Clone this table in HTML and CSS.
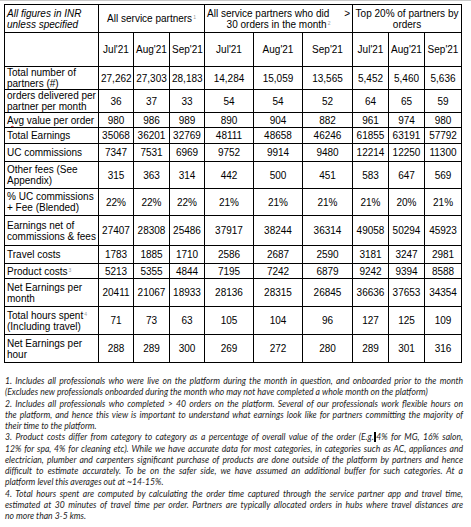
FILE: index.html
```html
<!DOCTYPE html>
<html>
<head>
<meta charset="utf-8">
<link rel="stylesheet" href="styles.css">
</head>
<body>
<div class="page">
<table class="fin">
<colgroup>
<col class="w94"><col class="w35"><col class="w36"><col class="w35"><col class="w49"><col class="w49"><col class="w50"><col class="w36"><col class="w36"><col class="w37">
</colgroup>
<tr class="h28">
<td class="lbl it">All figures in INR unless specified</td>
<td colspan="3">All service partners<sup class="fn">1</sup></td>
<td colspan="3" class="g2"><div class="g2l"><span>All service partners who did</span><span>&gt;</span></div>30 orders in the month<sup class="fn">2</sup></td>
<td colspan="3">Top 20% of partners by orders</td>
</tr>
<tr class="h34"><td class="lbl"></td><td>Jul'21</td><td>Aug'21</td><td>Sep'21</td><td>Jul'21</td><td>Aug'21</td><td>Sep'21</td><td>Jul'21</td><td>Aug'21</td><td>Sep'21</td></tr>
<tr class="h22"><td class="lbl">Total number of partners (#)</td><td>27,262</td><td>27,303</td><td>28,183</td><td>14,284</td><td>15,059</td><td>13,565</td><td>5,452</td><td>5,460</td><td>5,636</td></tr>
<tr class="h22"><td class="lbl">orders delivered per partner per month</td><td>36</td><td>37</td><td>33</td><td>54</td><td>54</td><td>52</td><td>64</td><td>65</td><td>59</td></tr>
<tr class="h15"><td class="lbl"><span class="spell">Avg</span> value per order</td><td>980</td><td>986</td><td>989</td><td>890</td><td>904</td><td>882</td><td>961</td><td>974</td><td>980</td></tr>
<tr class="h16"><td class="lbl">Total Earnings</td><td>35068</td><td>36201</td><td>32769</td><td>48111</td><td>48658</td><td>46246</td><td>61855</td><td>63191</td><td>57792</td></tr>
<tr class="h18"><td class="lbl">UC commissions</td><td>7347</td><td>7531</td><td>6969</td><td>9752</td><td>9914</td><td>9480</td><td>12214</td><td>12250</td><td>11300</td></tr>
<tr class="h27"><td class="lbl">Other fees (See Appendix)</td><td>315</td><td>363</td><td>314</td><td>442</td><td>500</td><td>451</td><td>583</td><td>647</td><td>569</td></tr>
<tr class="h27"><td class="lbl">% UC commissions + Fee (Blended)</td><td>22%</td><td>22%</td><td>22%</td><td>21%</td><td>21%</td><td>21%</td><td>21%</td><td>20%</td><td>21%</td></tr>
<tr class="h30"><td class="lbl">Earnings net of commissions &amp; fees</td><td>27407</td><td>28308</td><td>25486</td><td>37917</td><td>38244</td><td>36314</td><td>49058</td><td>50294</td><td>45923</td></tr>
<tr class="h18"><td class="lbl">Travel costs</td><td>1783</td><td>1885</td><td>1710</td><td>2586</td><td>2687</td><td>2590</td><td>3181</td><td>3247</td><td>2981</td></tr>
<tr class="h15"><td class="lbl">Product costs<sup class="fn">3</sup></td><td>5213</td><td>5355</td><td>4844</td><td>7195</td><td>7242</td><td>6879</td><td>9242</td><td>9394</td><td>8588</td></tr>
<tr class="h28"><td class="lbl">Net Earnings per month</td><td>20411</td><td>21067</td><td>18933</td><td>28136</td><td>28315</td><td>26845</td><td>36636</td><td>37653</td><td>34354</td></tr>
<tr class="h28"><td class="lbl">Total hours spent<sup class="fn">4</sup> (Including travel)</td><td>71</td><td>73</td><td>63</td><td>105</td><td>104</td><td>96</td><td>127</td><td>125</td><td>109</td></tr>
<tr class="h28"><td class="lbl">Net Earnings per hour</td><td>288</td><td>289</td><td>300</td><td>269</td><td>272</td><td>280</td><td>289</td><td>301</td><td>316</td></tr>
</table>

<div class="notes">
<div class="j">1. Includes all professionals who were live on the platform during the month in question, and onboarded prior to the month</div>
<div>(Excludes new professionals onboarded during the month who may not have completed a whole month on the platform)</div>
<div class="j">2. Includes all professionals who completed &gt; 40 orders on the platform. Several of our professionals work flexible hours on</div>
<div class="j">the platform, and hence this view is important to understand what earnings look like for partners committing the majority of</div>
<div>their time to the platform.</div>
<div class="j">3. Product costs differ from category to category as a percentage of overall value of the order (E.g.<span class="caret"></span>4% for MG, 16% salon,</div>
<div class="j">12% for spa, 4% for cleaning etc). While we have accurate data for most categories, in categories such as AC, appliances and</div>
<div class="j">electrician, plumber and carpenters significant purchase of products are done outside of the platform by partners and hence</div>
<div class="j">difficult to estimate accurately. To be on the safer side, we have assumed an additional buffer for such categories. At a</div>
<div>platform level this averages out at ~14-15%.</div>
<div class="j">4. Total hours spent are computed by calculating the order time captured through the service partner app and travel time,</div>
<div class="j">estimated at 30 minutes of travel time per order. Partners are typically allocated orders in hubs where travel distances are</div>
<div>no more than 3-5 kms.</div>
</div>
</div>
</body>
</html>
```

FILE: styles.css
```css
html, body {
  margin: 0;
  padding: 0;
  background: #ffffff;
}

body {
  font-family: "Liberation Sans", Arial, sans-serif;
  color: #000;
}

.page {
  border-top: 1px solid #c8c8c8;
  padding: 3px 0 0 4px;
}

.fin {
  border-collapse: collapse;
  table-layout: fixed;
  width: 458px;
  font-size: 10px;
  line-height: 11px;
}

.fin td {
  border: 1px solid #000;
  padding: 0 2px;
  text-align: center;
  vertical-align: middle;
  overflow: hidden;
}

.fin td.lbl {
  text-align: left;
  padding-left: 2px;
}

.it {
  font-style: italic;
}

.w94 { width: 94px; }
.w35 { width: 35px; }
.w36 { width: 36px; }
.w37 { width: 37px; }
.w49 { width: 49px; }
.w50 { width: 50px; }

.h15 { height: 15px; }
.h16 { height: 16px; }
.h18 { height: 18px; }
.h22 { height: 22px; }
.h27 { height: 27px; }
.h28 { height: 28px; }
.h30 { height: 30px; }
.h34 { height: 34px; }

.g2 {
  padding: 0 5px 0 4px;
}

.g2l {
  display: flex;
  justify-content: space-between;
}

.fn {
  font-size: 5px;
  line-height: 0;
  color: #9a9a9a;
  vertical-align: 3px;
  margin-left: 1px;
}

.spell {
  text-decoration-line: underline;
  text-decoration-style: wavy;
  text-decoration-color: #d02020;
  text-decoration-thickness: 1px;
  text-underline-offset: 1px;
}

.notes {
  margin: 13px 0 0 1px;
  width: 458px;
  font-family: Lato, "Open Sans", sans-serif;
  font-style: italic;
  font-size: 8.6px;
  line-height: 11.25px;
  color: #1c1c1c;
}

.notes .j {
  text-align: justify;
  text-align-last: justify;
}

.caret {
  display: inline-block;
  width: 1.5px;
  height: 10px;
  background: #000;
  vertical-align: -2px;
  margin: 0 0.5px;
}
```
